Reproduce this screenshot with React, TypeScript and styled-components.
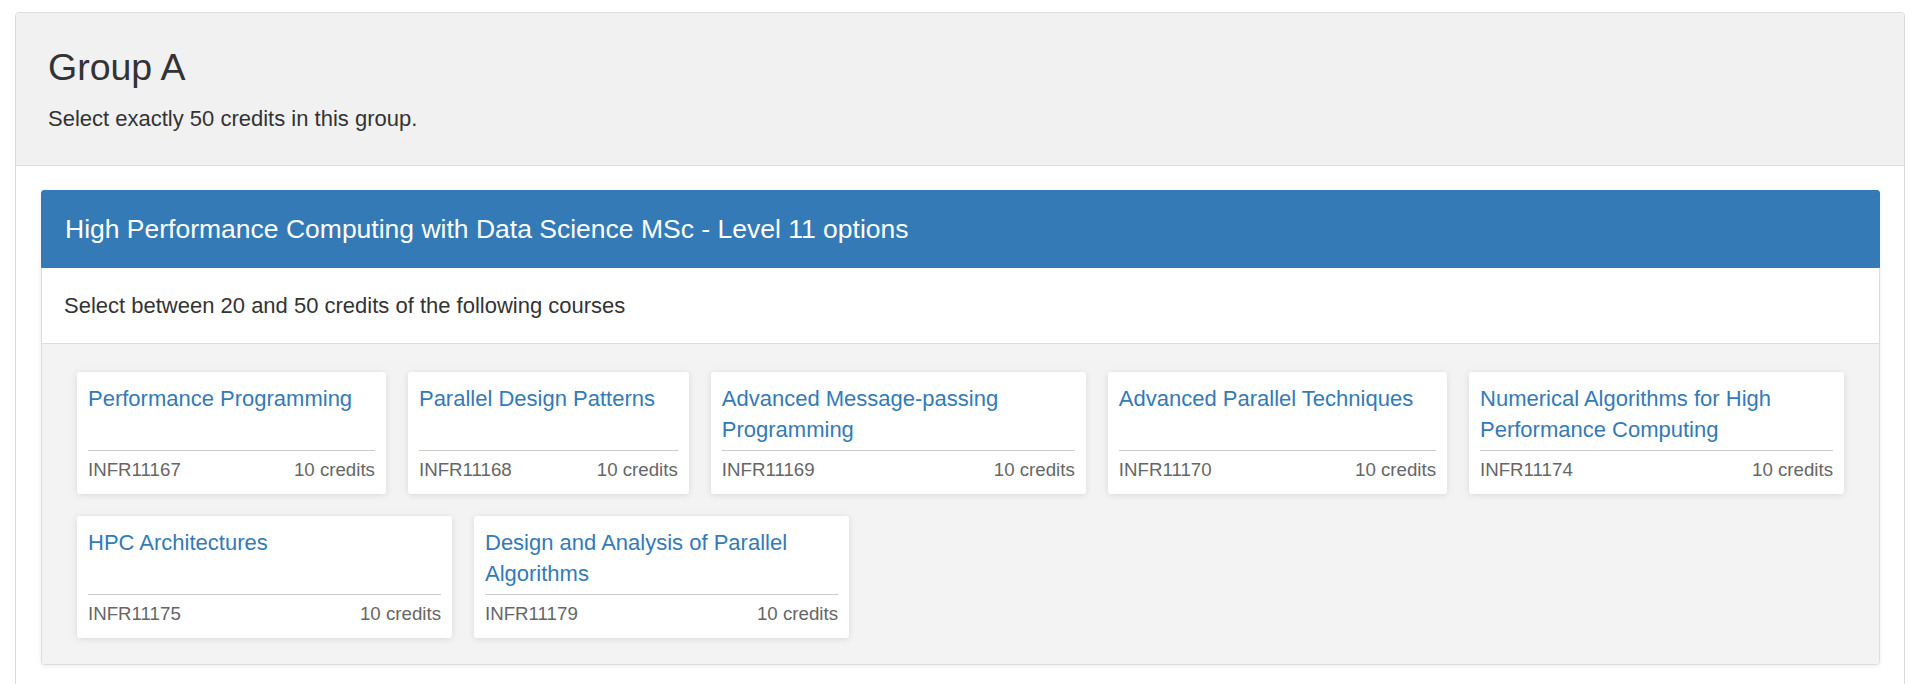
import React from "react";
import styled, { createGlobalStyle } from "styled-components";

const GlobalStyle = createGlobalStyle`
  html, body {
    margin: 0;
    padding: 0;
    background: #ffffff;
  }
  body {
    font-family: "Liberation Sans", Arial, Helvetica, sans-serif;
    color: #333333;
  }
  * { box-sizing: border-box; }
`;

const Page = styled.div`
  padding: 12px 15px 0 15px;
`;

const GroupPanel = styled.section`
  border: 1px solid #dddddd;
  border-radius: 4px;
  background: #ffffff;
`;

const GroupHeading = styled.header`
  background: #f1f1f1;
  border-bottom: 1px solid #dddddd;
  border-radius: 3px 3px 0 0;
  padding: 33px 32px 31px 32px;
`;

const GroupTitle = styled.h1`
  margin: 0 0 15px 0;
  font-size: 37.5px;
  font-weight: 500;
  line-height: 42px;
  color: #333333;
`;

const Lead = styled.p`
  margin: 0;
  font-size: 22px;
  line-height: 31px;
  color: #333333;
`;

const GroupBody = styled.div`
  padding: 24px 24px 24px 25px;
`;

const OptionPanel = styled.div`
  border: 1px solid #dddddd;
  border-radius: 4px;
  background: #ffffff;
  box-shadow: 0 1px 4px rgba(0, 0, 0, 0.08);
`;

const OptionHeading = styled.div`
  background: #337ab7;
  border: 1px solid #337ab7;
  margin: -1px -1px 0 -1px;
  border-radius: 3px 3px 0 0;
  padding: 24px 23px;
  color: #ffffff;
  font-size: 26.5px;
  line-height: 28px;
`;

const OptionNote = styled.div`
  padding: 22px 22px;
  font-size: 22px;
  line-height: 31px;
  color: #333333;
  border-bottom: 1px solid #dddddd;
`;

const CourseGrid = styled.div`
  display: flex;
  flex-wrap: wrap;
  gap: 22px;
  padding: 28px 35px 26px 35px;
  background: #f3f3f3;
  border-radius: 0 0 3px 3px;
`;

const CourseCard = styled.div`
  flex: 1 1 auto;
  max-width: 375px;
  background: #ffffff;
  border-radius: 3px;
  box-shadow: 0 1px 7px rgba(0, 0, 0, 0.11);
  padding: 11px;
`;

const CourseTitleBox = styled.div`
  min-height: 68px;
  padding-bottom: 5px;
  border-bottom: 1px solid #cccccc;
`;

const CourseLink = styled.a`
  font-size: 22px;
  line-height: 31px;
  color: #337ab7;
  text-decoration: none;
`;

const CourseFooter = styled.div`
  display: flex;
  justify-content: space-between;
  padding-top: 6px;
  font-size: 18.7px;
  line-height: 26px;
  color: #666666;
`;

type Course = { title: string; code: string; credits: number };

const courses: Course[] = [
  { title: "Performance Programming", code: "INFR11167", credits: 10 },
  { title: "Parallel Design Patterns", code: "INFR11168", credits: 10 },
  { title: "Advanced Message-passing Programming", code: "INFR11169", credits: 10 },
  { title: "Advanced Parallel Techniques", code: "INFR11170", credits: 10 },
  { title: "Numerical Algorithms for High Performance Computing", code: "INFR11174", credits: 10 },
  { title: "HPC Architectures", code: "INFR11175", credits: 10 },
  { title: "Design and Analysis of Parallel Algorithms", code: "INFR11179", credits: 10 },
];

export default function App() {
  return (
    <>
      <GlobalStyle />
      <Page>
        <GroupPanel>
          <GroupHeading>
            <GroupTitle>Group A</GroupTitle>
            <Lead>Select exactly 50 credits in this group.</Lead>
          </GroupHeading>
          <GroupBody>
            <OptionPanel>
              <OptionHeading>
                High Performance Computing with Data Science MSc - Level 11 options
              </OptionHeading>
              <OptionNote>Select between 20 and 50 credits of the following courses</OptionNote>
              <CourseGrid>
                {courses.map((c) => (
                  <CourseCard key={c.code}>
                    <CourseTitleBox>
                      <CourseLink href="#">{c.title}</CourseLink>
                    </CourseTitleBox>
                    <CourseFooter>
                      <span>{c.code}</span>
                      <span>{c.credits} credits</span>
                    </CourseFooter>
                  </CourseCard>
                ))}
              </CourseGrid>
            </OptionPanel>
          </GroupBody>
        </GroupPanel>
      </Page>
    </>
  );
}
